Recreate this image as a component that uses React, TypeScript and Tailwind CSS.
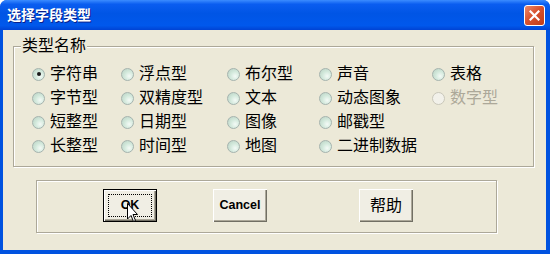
import React from "react";

const FONT = { fontFamily: '"Liberation Sans", "Noto Sans CJK SC", sans-serif' };

type Item = { label: string; checked?: boolean; disabled?: boolean } | null;

const items: Item[] = [
  { label: "字符串", checked: true },
  { label: "浮点型" },
  { label: "布尔型" },
  { label: "声音" },
  { label: "表格" },
  { label: "字节型" },
  { label: "双精度型" },
  { label: "文本" },
  { label: "动态图象" },
  { label: "数字型", disabled: true },
  { label: "短整型" },
  { label: "日期型" },
  { label: "图像" },
  { label: "邮戳型" },
  null,
  { label: "长整型" },
  { label: "时间型" },
  { label: "地图" },
  { label: "二进制数据" },
  null,
];

const Radio = ({ checked, disabled }: { checked?: boolean; disabled?: boolean }) => (
  <span
    className={
      "relative w-[13px] h-[13px] rounded-full shrink-0 border flex items-center justify-center " +
      (disabled
        ? "border-[#c9c7ba] bg-[#f2f1ea]"
        : "border-[#a5b3ae] bg-[radial-gradient(circle_at_65%_65%,#f4faf6_0%,#d3e9dc_45%,#b8d0c2_100%)]")
    }
  >
    {checked && <span className="w-[4px] h-[4px] rounded-full bg-[#1a1a1a]" />}
  </span>
);

const Button = ({ children, primary, bold }: { children: React.ReactNode; primary?: boolean; bold?: boolean }) => (
  <div
    className={
      "relative w-[54px] h-[33px] bg-[#f0eee4] flex items-center justify-center text-black " +
      (primary
        ? "border border-black shadow-[inset_1px_1px_0_#ffffff,inset_-1px_-1px_0_#716f64,inset_-2px_-2px_0_#aca899]"
        : "shadow-[inset_1px_1px_0_#ffffff,inset_-1px_-1px_0_#716f64,inset_-2px_-2px_0_#aca899]")
    }
  >
    {primary && <div className="absolute inset-[4px] border border-dotted border-black" />}
    <span className={bold ? "text-[12.5px] font-bold leading-none" : "text-[16px] leading-none"}>{children}</span>
  </div>
);

export default function App() {
  return (
    <div className="w-[550px] h-[254px] flex flex-col bg-[#0052e0] rounded-t-[7px] overflow-hidden" style={FONT}>
      {/* title bar */}
      <div className="h-[30px] shrink-0 flex items-center justify-between pl-[7px] pr-[5px] bg-[linear-gradient(to_bottom,#3b8cff_0%,#0a5df0_14%,#0055e5_45%,#0058ec_85%,#0043d4_100%)]">
        <span className="text-white font-bold text-[14px] leading-none [text-shadow:1px_1px_0_#0a1f8a]">选择字段类型</span>
        <div className="w-[21px] h-[21px] rounded-[3px] border border-white bg-[linear-gradient(135deg,#eb8a6c_0%,#d8522f_45%,#c13c18_100%)] flex items-center justify-center">
          <svg width="11" height="11" viewBox="0 0 11 11">
            <path d="M1.5 1.5 L9.5 9.5 M9.5 1.5 L1.5 9.5" stroke="#ffffff" strokeWidth="2.2" strokeLinecap="square" />
          </svg>
        </div>
      </div>

      {/* client area */}
      <div className="flex-1 ml-[3px] mr-[4px] mb-[4px] bg-[#ece9d8] flex flex-col">
        <div className="relative ml-[10px] mt-[16px] w-[521px] h-[121px] border border-[#aca899] shadow-[inset_1px_1px_0_#ffffff,1px_1px_0_#ffffff]">
          <span className="absolute left-[7px] top-[-10px] bg-[#ece9d8] px-[1px] text-[16px] leading-[18px] text-black">类型名称</span>
          <div className="pt-[15px] pl-[18px] grid grid-cols-[89px_106px_92px_113px_1fr] auto-rows-[24px]">
            {items.map((it, i) =>
              it ? (
                <div key={i} className="flex items-center gap-[5px]">
                  <Radio checked={it.checked} disabled={it.disabled} />
                  <span className={"text-[16px] leading-[24px] " + (it.disabled ? "text-[#aca899]" : "text-black")}>{it.label}</span>
                </div>
              ) : (
                <div key={i} />
              )
            )}
          </div>
        </div>

        <div className="ml-[33px] mt-[13px] w-[461px] h-[53px] border border-[#aca899] shadow-[inset_1px_1px_0_#ffffff,1px_1px_0_#ffffff] flex items-start pt-[8px] pl-[66px]">
          <div className="relative">
            <Button primary bold>OK</Button>
            <svg className="absolute left-[24px] top-[14px]" width="12" height="20" viewBox="0 0 12 20">
              <path d="M0.5 0.5 L0.5 16 L4 12.5 L6.5 18.5 L8.5 17.5 L6 11.5 L10.5 11.5 Z" fill="#ffffff" stroke="#000000" strokeWidth="1" strokeLinejoin="miter" />
            </svg>
          </div>
          <div className="ml-[56px]">
            <Button bold>Cancel</Button>
          </div>
          <div className="ml-[92px]">
            <Button>帮助</Button>
          </div>
        </div>
      </div>
    </div>
  );
}
